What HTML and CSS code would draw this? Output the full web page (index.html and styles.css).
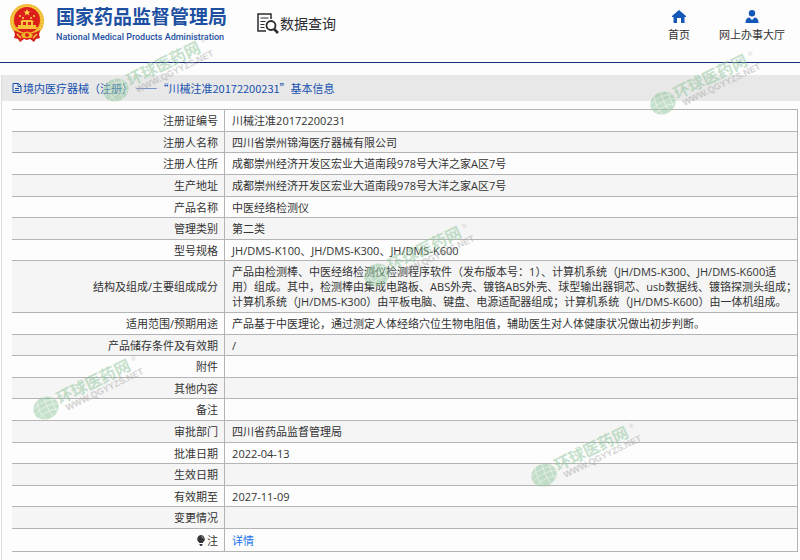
FILE: index.html
```html
<!DOCTYPE html>
<html lang="zh-CN">
<head>
<meta charset="utf-8">
<meta name="viewport" content="width=device-width, initial-scale=1">
<title>国家药品监督管理局 数据查询</title>
<link rel="stylesheet" href="styles.css">
</head>
<body>
<header class="header">
  <svg class="emblem" viewBox="0 0 36 38" aria-hidden="true">
    <path d="M7 27l-2 7 4 1 2 3 4-3 3 1 3-1 4 3 2-3 4-1-2-7z" fill="#d8211c"/>
    <circle cx="18" cy="17" r="17" fill="#f0b429"/>
    <circle cx="18" cy="17" r="15" fill="none" stroke="#f9d45c" stroke-width="1.5" stroke-dasharray="2 1"/>
    <circle cx="18" cy="16" r="13" fill="#dc1f1a"/>
    <path d="M18 5l1 2.400h2.500l-2 1.600.7 2.500-2.200-1.500-2.200 1.500.7-2.500-2-1.600H17z" fill="#ffdc4a"/>
    <g fill="#ffdc4a"><circle cx="11" cy="12" r="1"/><circle cx="14" cy="14" r="1"/><circle cx="22" cy="14" r="1"/><circle cx="25" cy="12" r="1"/></g>
    <path d="M11 18l2-2h10l2 2zM9 21h18v2H9zM12 18h2v3h-2zM17 18h2v3h-2zM22 18h2v3h-2zM7 23h22l-2 2H9z" fill="#f7c33b"/>
    <path d="M5 26q13 8 26 0l-1 5q-12 5-24 0z" fill="#d8211c"/>
    <path d="M12 31q6-7 12 0l-2 3h-8z" fill="#f0b429"/>
    <circle cx="18" cy="31" r="2" fill="#d8211c"/>
    <path d="M8 30l4 4M28 30l-4 4" stroke="#f5c543" stroke-width="1.500"/>
  </svg>
  <div class="brand">
    <div class="brand-cn">国家药品监督管理局</div>
    <div class="brand-en">National Medical Products Administration</div>
  </div>
  <div class="query">
    <svg class="query-icon" viewBox="0 0 22 21" fill="none" stroke="#2b2b30" aria-hidden="true">
      <path d="M14 6V1H1v17h8" stroke-width="1.500"/>
      <path d="M3.500 5h8M3.500 8.500h5M3.500 11.500h4M3.500 14.500h4" stroke-width="1.200"/>
      <circle cx="14" cy="12.500" r="4.500" stroke-width="1.800"/>
      <path d="M17 16l4 4" stroke-width="2.500"/>
    </svg>
    <span>数据查询</span>
  </div>
  <nav class="nav">
    <a href="#">
      <svg class="nav-icon" viewBox="0 0 14 13" aria-hidden="true"><path d="M7 0l7 6v1h-1.500v6H9V8H5v5H1.500V7H0V6z" fill="#1458b8"/></svg>
      <span>首页</span>
    </a>
    <a href="#">
      <svg class="nav-icon" viewBox="0 0 14 13" aria-hidden="true"><circle cx="7" cy="3.200" r="3.200" fill="#1458b8"/><path d="M.5 13q0-5.500 4-5.500L7 10l2.500-2.500q4 0 4 5.500z" fill="#1458b8"/></svg>
      <span>网上办事大厅</span>
    </a>
  </nav>
</header>
<main class="content">
  <h1 class="title">
    <svg class="doc-icon" viewBox="0 0 10 10" fill="none" stroke="#1550b0" aria-hidden="true"><path d="M1 .5h5.500l2.500 2.500v6.500H1zM6 .5V3.500h3M3 5.500h4M3 7.500h4"/></svg>
    <span>境内医疗器械（注册） ——“川械注准20172200231”基本信息</span>
  </h1>
  <table class="info">
    <tbody>
      <tr><th scope="row">注册证编号</th><td>川械注准20172200231</td></tr>
      <tr><th scope="row">注册人名称</th><td>四川省崇州锦海医疗器械有限公司</td></tr>
      <tr><th scope="row">注册人住所</th><td>成都崇州经济开发区宏业大道南段978号大洋之家A区7号</td></tr>
      <tr><th scope="row">生产地址</th><td>成都崇州经济开发区宏业大道南段978号大洋之家A区7号</td></tr>
      <tr><th scope="row">产品名称</th><td>中医经络检测仪</td></tr>
      <tr><th scope="row">管理类别</th><td>第二类</td></tr>
      <tr><th scope="row">型号规格</th><td>JH/DMS-K100、JH/DMS-K300、JH/DMS-K600</td></tr>
      <tr class="tall"><th scope="row">结构及组成/主要组成成分</th><td>产品由检测棒、中医经络检测仪检测程序软件（发布版本号：1）、计算机系统（JH/DMS-K300、JH/DMS-K600适<br>用）组成。其中，检测棒由集成电路板、ABS外壳、镀铬ABS外壳、球型输出器铜芯、usb数据线、镀铬探测头组成；<br>计算机系统（JH/DMS-K300）由平板电脑、键盘、电源适配器组成；计算机系统（JH/DMS-K600）由一体机组成。</td></tr>
      <tr><th scope="row">适用范围/预期用途</th><td>产品基于中医理论，通过测定人体经络穴位生物电阻值，辅助医生对人体健康状况做出初步判断。</td></tr>
      <tr><th scope="row">产品储存条件及有效期</th><td>/</td></tr>
      <tr><th scope="row">附件</th><td></td></tr>
      <tr><th scope="row">其他内容</th><td></td></tr>
      <tr><th scope="row">备注</th><td></td></tr>
      <tr><th scope="row">审批部门</th><td>四川省药品监督管理局</td></tr>
      <tr><th scope="row">批准日期</th><td>2022-04-13</td></tr>
      <tr><th scope="row">生效日期</th><td></td></tr>
      <tr><th scope="row">有效期至</th><td>2027-11-09</td></tr>
      <tr><th scope="row">变更情况</th><td></td></tr>
      <tr><th scope="row"><svg class="bulb" viewBox="0 0 8 11" aria-hidden="true"><path d="M4 0a4 4 0 0 1 2 7.300V8H2v-.7A4 4 0 0 1 4 0zM2.500 9h3v1l-1 1h-1l-1-1z" fill="#333"/><path d="M4.500 1.500q1.700.3 1.800 2" fill="none" stroke="#ccc" stroke-width=".8"/></svg>注</th><td><a href="#">详情</a></td></tr>
    </tbody>
  </table>
</main>
<svg class="mark mark-1" viewBox="0 0 114 70" aria-hidden="true">
  <g id="mark" transform="translate(14 56) rotate(-26)">
    <ellipse cx="0" cy="0" rx="13" ry="11" fill="#8fc59a"/>
    <path d="M-12-4Q0-9 12-4M-13 1Q0-4 13 1M-11 6Q0 2 11 6M-5-10Q-9 0-5 10M3-11Q0 0 3 11M9-8Q8 0 8 8" fill="none" stroke="#eef6ef" stroke-width=".6"/>
    <text x="14" y="3" class="mark-cn">环球医药网</text>
    <text x="18" y="12" class="mark-url">WWW.QGYYZS.NET</text>
    <text x="98" y="-4" class="mark-reg">®</text>
  </g>
</svg>
<svg class="mark mark-2" viewBox="0 0 114 70" aria-hidden="true"><use href="#mark"/></svg>
<svg class="mark mark-3" viewBox="0 0 114 70" aria-hidden="true"><use href="#mark"/></svg>
<svg class="mark mark-4" viewBox="0 0 114 70" aria-hidden="true"><use href="#mark"/></svg>
<svg class="mark mark-5" viewBox="0 0 114 70" aria-hidden="true"><use href="#mark"/></svg>
</body>
</html>
```
FILE: styles.css
```css
* {
  box-sizing: border-box;
}

body {
  position: relative;
  margin: 0;
  background: #fdfdfd;
  color: #333;
  font: 11px/15px "Open Sans", "Noto Sans CJK SC", sans-serif;
}

a {
  text-decoration: none;
}

.header {
  display: flex;
  align-items: flex-start;
  height: 63px;
  padding: 4px 15px 0 9px;
  border-bottom: 1px solid #14307c;
}

.emblem {
  width: 36px;
  height: 38px;
}

.brand {
  margin-left: 11px;
  color: #1e50a2;
}

.brand-cn {
  font-size: 19px;
  font-weight: 700;
  line-height: 27px;
}

.brand-en {
  font: 500 9px/12px Roboto, sans-serif;
}

.query {
  display: flex;
  align-items: center;
  gap: 1px;
  margin: 9px 0 0 30px;
  color: #2b2b30;
  font-size: 14px;
  line-height: 20px;
}

.query-icon {
  width: 22px;
  height: 21px;
}

.nav {
  display: flex;
  gap: 29px;
  margin: 6px 0 0 auto;
}

.nav a {
  display: flex;
  flex-direction: column;
  align-items: center;
  gap: 4px;
  color: #333;
}

.nav-icon {
  width: 14px;
  height: 13px;
}

.content {
  margin: 12px 0 0 1px;
  border-left: 1px solid #ddd;
  padding-bottom: 8px;
}

.title {
  display: flex;
  align-items: center;
  gap: 1px;
  height: 26px;
  margin: 0 0 8px;
  padding-left: 10px;
  background: #e8e8e8;
  color: #1550b0;
  font-family: "Noto Sans CJK SC", sans-serif;
  font-size: 11px;
  font-weight: 400;
}

.doc-icon {
  width: 10px;
  height: 10px;
}

.info {
  width: calc(100% - 12px);
  margin-left: 10px;
  border-collapse: collapse;
  border: 1px solid #b4b4b4;
  border-left: 0;
}

.info tr {
  height: 22px;
}

.info tr:nth-child(5n + 2),
.info tr:nth-child(5n + 5) {
  height: 21px;
}

.info tr.tall {
  height: 52px;
}

.info tr:last-child {
  height: 23px;
}

.info tr:nth-child(even) {
  background: #f5f5f5;
}

.info th,
.info td {
  padding: 2px 0 2px 7px;
  border-top: 1px solid #b4b4b4;
  font-weight: 400;
  text-align: left;
  white-space: nowrap;
}

.info th {
  width: 215px;
  padding: 2px 6px 2px 0;
  border-right: 1px solid #b4b4b4;
  text-align: right;
}

.info a {
  color: #1a73e8;
}

.bulb {
  width: 8px;
  height: 11px;
  margin-right: 2px;
  vertical-align: -1px;
}

.mark {
  position: absolute;
  width: 114px;
  height: 70px;
  opacity: 0.5;
  pointer-events: none;
}

.mark-cn {
  fill: #8fc59a;
  font: 700 16px "Noto Sans CJK SC", sans-serif;
}

.mark-url {
  fill: #aaa;
  font: 700 9px "Liberation Sans", sans-serif;
}

.mark-reg {
  fill: #aaa;
  font: 6px "Liberation Sans", sans-serif;
}

.mark-1 { left: 102px; top: 34px; }
.mark-2 { left: 649px; top: 47px; }
.mark-3 { left: 363px; top: 219px; }
.mark-4 { left: 32px; top: 352px; }
.mark-5 { left: 530px; top: 419px; }
```
